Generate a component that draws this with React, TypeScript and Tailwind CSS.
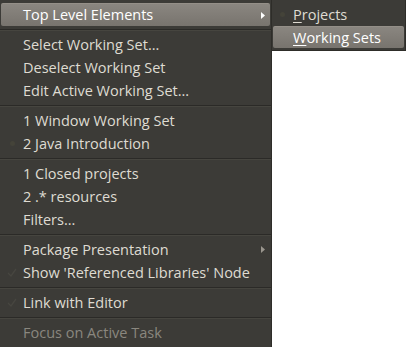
const menuFont = { fontFamily: '"Open Sans", "Noto Sans", sans-serif' };

type Entry =
  | { kind: 'sep' }
  | { kind: 'item'; label: string; active?: boolean; arrow?: boolean; disabled?: boolean; mark?: 'dot' | 'check' };

const mainEntries: Entry[] = [
  { kind: 'item', label: 'Top Level Elements', active: true, arrow: true },
  { kind: 'sep' },
  { kind: 'item', label: 'Select Working Set...' },
  { kind: 'item', label: 'Deselect Working Set' },
  { kind: 'item', label: 'Edit Active Working Set...' },
  { kind: 'sep' },
  { kind: 'item', label: '1 Window Working Set' },
  { kind: 'item', label: '2 Java Introduction', mark: 'dot' },
  { kind: 'sep' },
  { kind: 'item', label: '1 Closed projects' },
  { kind: 'item', label: '2 .* resources' },
  { kind: 'item', label: 'Filters...' },
  { kind: 'sep' },
  { kind: 'item', label: 'Package Presentation', arrow: true },
  { kind: 'item', label: "Show 'Referenced Libraries' Node", mark: 'check' },
  { kind: 'sep' },
  { kind: 'item', label: 'Link with Editor', mark: 'check' },
  { kind: 'sep' },
  { kind: 'item', label: 'Focus on Active Task', disabled: true },
];

const Mark = ({ type }: { type?: 'dot' | 'check' }) => {
  if (type === 'dot') return <span className="w-[5px] h-[5px] rounded-full bg-[#444339]" />;
  if (type === 'check')
    return (
      <svg width="10" height="9" viewBox="0 0 10 9">
        <path d="M1 5 L4 8 L9 1" stroke="#474640" strokeWidth="1.3" fill="none" />
      </svg>
    );
  return null;
};

const Separator = () => (
  <div className="h-[7px] flex flex-col justify-center">
    <div className="h-px bg-[#2b2a27]" />
    <div className="h-px bg-[#46453f]" />
  </div>
);

const Row = ({ entry }: { entry: Extract<Entry, { kind: 'item' }> }) => (
  <div
    className={
      entry.active
        ? 'h-[23px] mx-px flex items-center rounded-[2px] bg-gradient-to-b from-[#8a8680] to-[#78746e] border-t border-[#948f88] text-white'
        : 'h-[23px] mx-px flex items-center'
    }
  >
    <div className="w-[22px] flex justify-center">
      <Mark type={entry.mark} />
    </div>
    <span
      className={
        entry.disabled
          ? 'flex-1 text-[14.5px] text-[#8a877f] whitespace-nowrap'
          : entry.active
            ? 'flex-1 text-[14.5px] text-white whitespace-nowrap'
            : 'flex-1 text-[14.5px] text-[#dfdbd2] whitespace-nowrap'
      }
    >
      {entry.label}
    </span>
    {entry.arrow && (
      <svg width="4" height="7" viewBox="0 0 4 7" className="mr-[5px]">
        <path d="M0 0 L4 3.5 L0 7 Z" fill={entry.active ? '#ffffff' : '#9a968e'} />
      </svg>
    )}
  </div>
);

export default function App() {
  return (
    <div className="w-[406px] h-[347px] bg-white flex items-start overflow-hidden" style={menuFont}>
      {/* main menu */}
      <div className="w-[272px] h-[347px] bg-[#3c3b37] border-r border-[#2e2d29] pt-[3px] shrink-0">
        {mainEntries.map((e, i) =>
          e.kind === 'sep' ? <Separator key={i} /> : <Row key={i} entry={e} />
        )}
      </div>

      {/* submenu */}
      <div className="w-[134px] h-[51px] bg-[#3c3b37] border-r border-b border-[#2e2d29] pt-[3px] shrink-0">
        <div className="h-[23px] flex items-center">
          <div className="w-[21px] flex justify-center">
            <span className="w-[5px] h-[5px] rounded-full bg-[#444339]" />
          </div>
          <span className="text-[14.5px] text-[#dfdbd2] whitespace-nowrap">
            <span className="underline underline-offset-2">P</span>rojects
          </span>
        </div>
        <div className="h-[22px] mx-px flex items-center rounded-[2px] bg-gradient-to-b from-[#8a8680] to-[#78746e] border-t border-[#948f88]">
          <div className="w-[20px]" />
          <span className="text-[14.5px] text-white whitespace-nowrap">
            <span className="underline underline-offset-2">W</span>orking Sets
          </span>
        </div>
      </div>
    </div>
  );
}
